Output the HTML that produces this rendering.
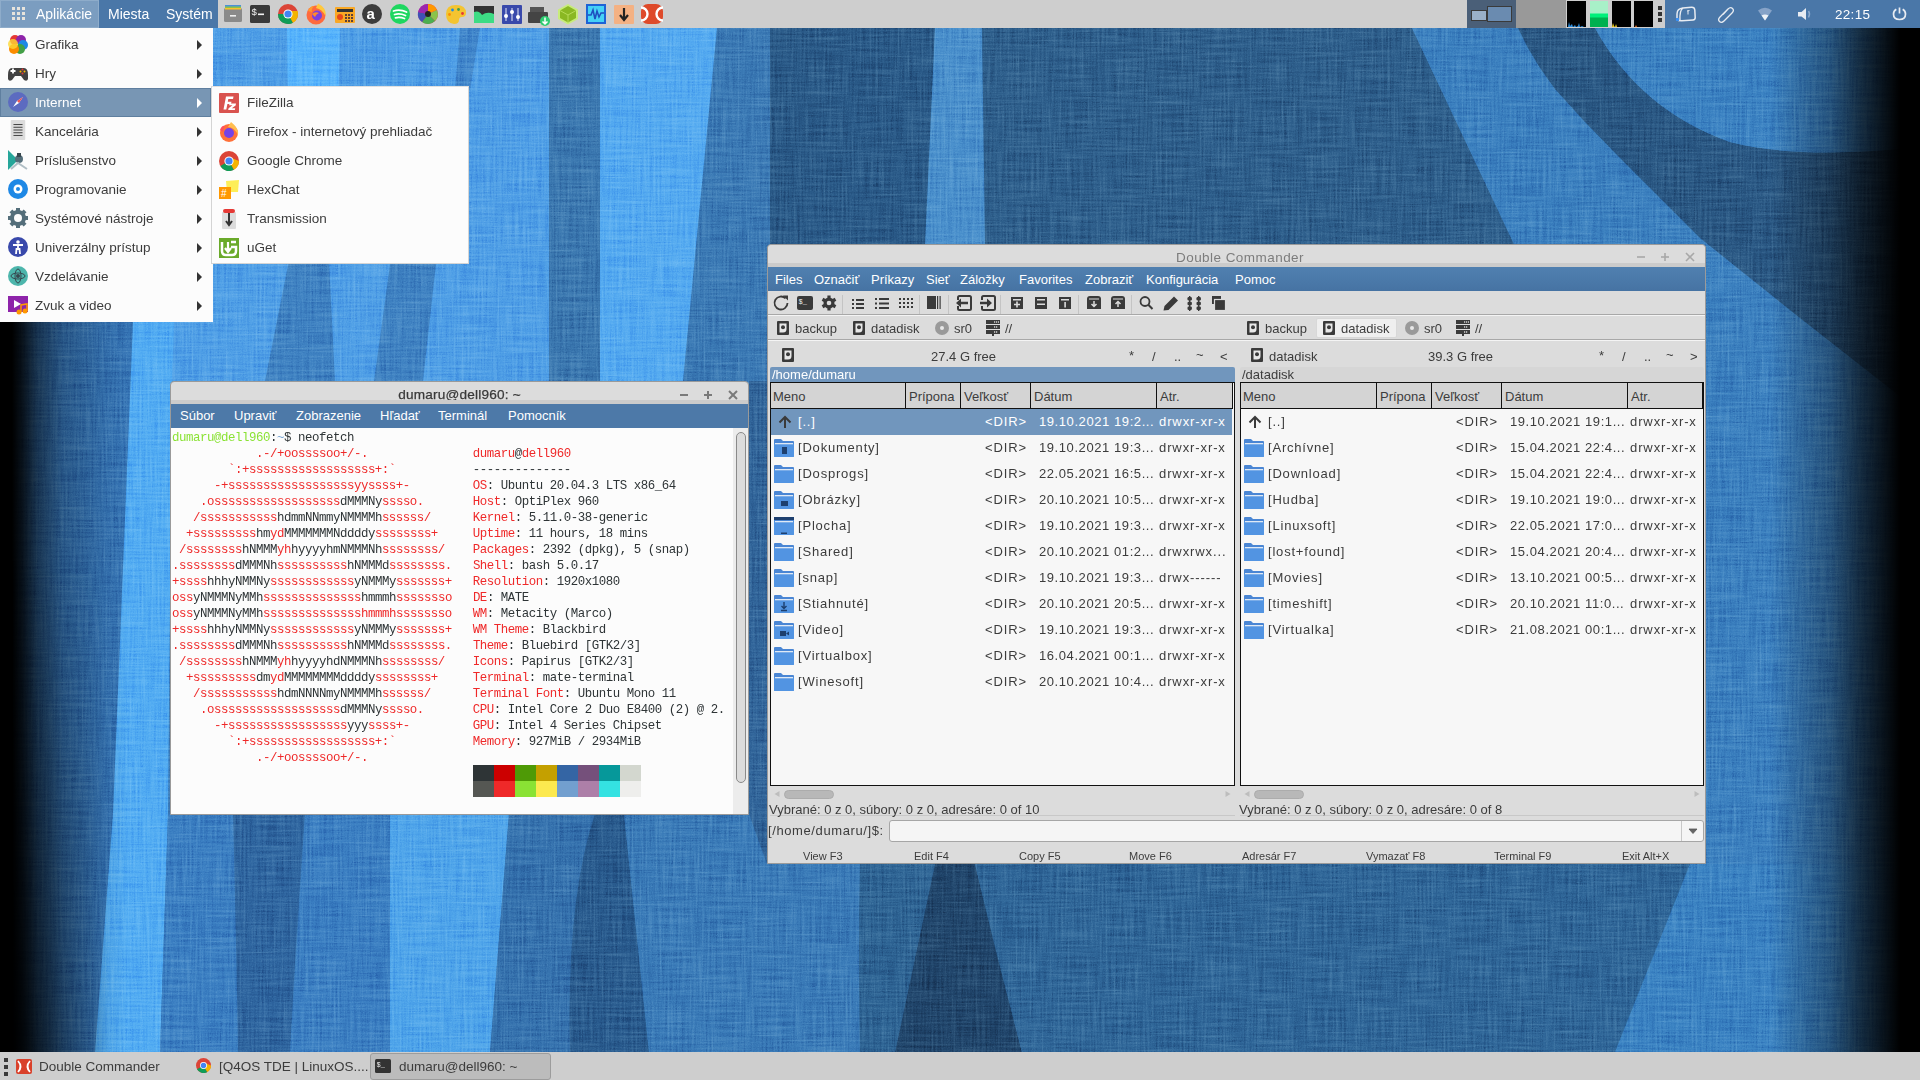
<!DOCTYPE html>
<html><head><meta charset="utf-8">
<style>
*{margin:0;padding:0;box-sizing:border-box}
html,body{width:1920px;height:1080px;overflow:hidden;background:#3f7fbd;font-family:"Liberation Sans",sans-serif}
.a{position:absolute}
#wall{position:absolute;left:0;top:0;width:1920px;height:1080px}
/* top panel */
#panel{position:absolute;left:0;top:0;width:1920px;height:28px;background:#cecece}
.ptxt{position:absolute;top:0;height:28px;line-height:28px;color:#fff;font-size:14px;white-space:nowrap}
/* menus */
.menu{position:absolute;background:#fcfcfc}
.mi{position:absolute;left:0;height:29px;width:100%;font-size:13.5px;color:#3c3c3c;line-height:29px;white-space:nowrap}
.mi .t{position:absolute;left:35px;top:0}
.mi .ar{position:absolute;left:197px;top:10px;width:0;height:0;border-top:5px solid transparent;border-bottom:5px solid transparent;border-left:5px solid #333}
.ic{position:absolute;width:20px;height:20px}
/* windows */
.win{position:absolute;background:#dcdcdc;border:1px solid #9a9a9a;border-radius:4px 4px 0 0;overflow:hidden}
.title{position:absolute;left:0;right:0;top:0;height:19px;text-align:center;font-size:13px;line-height:21px;white-space:nowrap}
.strip{position:absolute;left:0;right:0;top:18px;height:4px;background:#cbcbcb}
.mbar{position:absolute;left:0;right:0;top:22px;height:24px;background:#4d79a8}
.mbar span{position:absolute;top:0;line-height:24px;color:#fff;font-size:13px;white-space:nowrap}
.term{position:absolute;font-family:"Liberation Mono",monospace;font-size:12.4px;letter-spacing:-0.44px;line-height:16px;white-space:pre;color:#2e3436}
.r{color:#ef2929}.g{color:#8ae234}.b{color:#729fcf}
.dc{font-size:13px;color:#3c3c3c;white-space:nowrap}
</style></head><body>
<svg id="wall" width="1920" height="1080" viewBox="0 0 1920 1080">
<defs>
<linearGradient id="vl" x1="0" x2="1" y1="0" y2="0"><stop offset="0" stop-color="#000"/><stop offset="0.08" stop-color="#000"/><stop offset="0.15" stop-color="#000" stop-opacity="0.85"/><stop offset="0.25" stop-color="#000" stop-opacity="0.55"/><stop offset="0.42" stop-color="#000" stop-opacity="0.25"/><stop offset="0.7" stop-color="#000" stop-opacity="0.06"/><stop offset="0.85" stop-color="#000" stop-opacity="0"/></linearGradient>
<linearGradient id="vr" x1="0" x2="1" y1="0" y2="0"><stop offset="0" stop-color="#000" stop-opacity="0"/><stop offset="0.4" stop-color="#000" stop-opacity="0.35"/><stop offset="0.6" stop-color="#000" stop-opacity="0.66"/><stop offset="0.87" stop-color="#000" stop-opacity="1"/><stop offset="1" stop-color="#000"/></linearGradient>
</defs>
<rect x="0" y="0" width="1920" height="1080" fill="#3d7cb8"/>
<!-- left light region top -->
<polygon points="130,28 770,28 770,381 130,381" fill="#4f9fe6"/>
<polygon points="287,28 340,28 335,264 290,264" fill="#57b4fb"/>
<polygon points="600,28 717,28 683,381 600,381" fill="#54aaf0"/>
<polygon points="549,28 600,28 600,381 549,381" fill="#3b78b0"/>
<polygon points="717,28 770,28 770,381 683,381" fill="#3b7ab5"/>
<polygon points="305,180 325,180 335,381 265,381" fill="#3f82c2"/>
<polygon points="410,120 452,120 423,381 374,381" fill="#3f82c2"/>
<polygon points="460,28 480,28 470,90 455,90" fill="#4288cc"/>
<!-- left vignette column -->
<polygon points="0,28 135,28 133,381 113,814 95,1052 0,1052" fill="#3675b5"/>
<polygon points="133,322 174,322 172,381 168,814 160,1052 95,1052 113,814" fill="#52acf2"/>
<!-- bottom bands -->
<polygon points="168,814 235,814 240,1052 160,1052" fill="#3b7fc2"/>
<path d="M233,814 L305,814 Q295,950 290,1052 L238,1052 Q236,930 233,814Z" fill="#2f66a0"/>
<polygon points="305,814 390,814 390,1052 290,1052" fill="#3b7fc2"/>
<polygon points="390,814 509,814 490,1052 390,1052" fill="#4fa5ea"/>
<polygon points="509,814 640,814 650,1052 490,1052" fill="#3572ae"/>
<path d="M595,814 L624,814 L649,1052 L570,1052 Q566,900 595,814Z" fill="#295b8e"/>
<polygon points="624,814 770,814 770,1052 649,1052" fill="#3a7bb8"/>
<!-- DC gap strip -->
<polygon points="749,381 767,381 767,864 749,814" fill="#31659a"/>
<!-- bottom right -->
<polygon points="767,864 860,864 860,1052 767,1052" fill="#3a7bb8"/>
<path d="M860,864 L935,864 L895,1052 L860,1052 Q858,950 860,864Z" fill="#2e6494"/>
<polygon points="935,864 975,864 1022,1052 895,1052" fill="#21466c"/>
<path d="M975,864 L1695,864 Q1675,970 1625,1052 L1022,1052 Q995,950 975,864Z" fill="#2f6698"/>
<polygon points="1690,864 1920,864 1920,1052 1615,1052" fill="#3a82c2"/>
<!-- top right -->
<polygon points="770,28 935,28 930,244 770,244" fill="#2a5a88"/>
<polygon points="935,28 982,28 985,244 925,244" fill="#4a90cc"/>
<polygon points="982,28 1412,28 1514,244 985,244" fill="#2e5f8c"/>
<polygon points="1412,28 1518,28 1528,48 1540,68 1555,89 1585,122 1620,158 1700,238 1800,318 1920,412 1920,864 1706,864 1706,244 1514,244" fill="#3b80bf"/>
<path d="M1518,28 L1595,28 Q1640,110 1730,142 Q1800,160 1920,147 L1920,412 L1800,318 L1700,238 L1620,158 L1585,122 L1555,89 L1540,68 L1528,48 L1518,28Z" fill="#2a5884"/>
<path d="M1595,28 Q1640,110 1730,142 Q1800,160 1920,147 L1920,28Z" fill="#3b82c2"/>
<filter id="tex" x="0" y="0" width="1920" height="1080" filterUnits="userSpaceOnUse" color-interpolation-filters="sRGB">
<feTurbulence type="fractalNoise" baseFrequency="0.5 0.02" numOctaves="2" seed="4" result="vs"/>
<feTurbulence type="fractalNoise" baseFrequency="0.02 0.5" numOctaves="2" seed="9" result="hs"/>
<feTurbulence type="fractalNoise" baseFrequency="0.8" numOctaves="1" seed="2" result="gr"/>
<feComposite in="vs" in2="hs" operator="arithmetic" k1="0" k2="0.45" k3="0.45" k4="0" result="st"/>
<feComposite in="st" in2="gr" operator="arithmetic" k1="0" k2="1" k3="0.3" k4="-0.15" result="n"/>
<feColorMatrix in="n" type="matrix" values="1.6 0 0 0 -0.03  1.6 0 0 0 -0.03  1.6 0 0 0 -0.03  0 0 0 0 1"/>
</filter>
<rect x="0" y="28" width="1920" height="1024" filter="url(#tex)" opacity="0.42" style="mix-blend-mode:soft-light"/>
<rect x="0" y="28" width="150" height="1024" fill="url(#vl)"/>
<linearGradient id="vl2" x1="0" x2="1" y1="0" y2="0"><stop offset="0" stop-color="#000" stop-opacity="0.9"/><stop offset="0.35" stop-color="#000" stop-opacity="0.5"/><stop offset="0.7" stop-color="#000" stop-opacity="0.2"/><stop offset="1" stop-color="#000" stop-opacity="0"/></linearGradient>
<linearGradient id="vm" x1="0" x2="0" y1="0" y2="1"><stop offset="0" stop-color="#fff" stop-opacity="0"/><stop offset="1" stop-color="#fff" stop-opacity="1"/></linearGradient><mask id="mk" maskUnits="userSpaceOnUse" x="0" y="560" width="120" height="492"><rect x="0" y="560" width="120" height="492" fill="url(#vm)"/></mask>
<rect x="0" y="560" width="110" height="492" fill="url(#vl2)" mask="url(#mk)"/>
<rect x="1770" y="28" width="150" height="1024" fill="url(#vr)"/>
</svg>

<!-- TOP PANEL -->
<div id="panel">
<div class="a" style="left:0;top:0;width:99px;height:28px;background:#7b9dc0;border:1px solid #8eacca"></div>
<div class="a" style="left:99px;top:0;width:119px;height:28px;background:#4a77a8"></div>
<svg class="a" style="left:12px;top:7px" width="13" height="13" viewBox="0 0 13 13" fill="#e8e4dc"><rect x="0" y="0" width="3" height="3"/><rect x="5" y="0" width="3" height="3"/><rect x="10" y="0" width="3" height="3"/><rect x="0" y="5" width="3" height="3"/><rect x="5" y="5" width="3" height="3"/><rect x="10" y="5" width="3" height="3"/><rect x="0" y="10" width="3" height="3"/><rect x="5" y="10" width="3" height="3"/><rect x="10" y="10" width="3" height="3"/></svg>
<span class="ptxt" style="left:36px">Aplikácie</span>
<span class="ptxt" style="left:108px">Miesta</span>
<span class="ptxt" style="left:166px">Systém</span>
<!-- launchers -->
<svg class="a" style="left:220px;top:2px" width="450" height="24" viewBox="0 0 450 24">
 <!-- 1 file cabinet -->
 <rect x="4" y="6" width="18" height="14" rx="1.5" fill="#8a8a8a"/><rect x="5" y="3" width="16" height="2" fill="#4a90d9"/><rect x="5" y="4.5" width="16" height="2" fill="#8bc34a"/><rect x="5" y="6" width="16" height="1.5" fill="#fbc02d"/><rect x="10" y="13" width="6" height="1.6" fill="#eee"/>
 <!-- 2 terminal -->
 <rect x="30" y="3" width="20" height="18" rx="1.5" fill="#3a3a3a"/><text x="31.5" y="12.5" font-size="9.5" fill="#f2f2f2" font-family="Liberation Sans">$</text><rect x="38" y="11.5" width="6" height="1.6" fill="#f2f2f2"/>
 <!-- 3 chrome -->
 <circle cx="68" cy="12" r="10" fill="#db4437"/><path d="M68,12 L58.5,15 A10,10 0 0 0 73,20.7Z" fill="#0f9d58"/><path d="M68,12 L73,20.7 A10,10 0 0 0 77.6,9 L68,9Z" fill="#f4b400"/><path d="M58,12 A10,10 0 0 0 63,20.7 L68,12Z" fill="#0f9d58"/><circle cx="68" cy="12" r="4.6" fill="#fff"/><circle cx="68" cy="12" r="3.6" fill="#4285f4"/>
 <!-- 4 firefox -->
 <circle cx="96" cy="13" r="9.5" fill="#ff6a3d"/><path d="M88,9 Q90,4 94,4 Q91,7 92,10Z" fill="#ff9a2e"/><path d="M98,1.5 Q107,6 105.5,14 Q102,7 96,6Z" fill="#ffc83d"/><circle cx="97" cy="13.5" r="5" fill="#7b3fe0"/><path d="M92,12 Q95,9 99,11 Q96,12 95,15Z" fill="#ff8c2a"/>
 <!-- 5 radio -->
 <rect x="115" y="5" width="20" height="16" rx="1" fill="#f9a825"/><rect x="117" y="7" width="16" height="3" fill="#333"/><circle cx="120" cy="15" r="3" fill="#e64a19"/><g fill="#5d4037"><rect x="125" y="12" width="2" height="2"/><rect x="128" y="12" width="2" height="2"/><rect x="131" y="12" width="2" height="2"/><rect x="125" y="15" width="2" height="2"/><rect x="128" y="15" width="2" height="2"/><rect x="131" y="15" width="2" height="2"/><rect x="125" y="18" width="2" height="2"/><rect x="128" y="18" width="2" height="2"/><rect x="131" y="18" width="2" height="2"/></g>
 <!-- 6 amazon a -->
 <circle cx="152" cy="12" r="10" fill="#3c3c3c"/><text x="146.5" y="17" font-size="15" font-weight="bold" fill="#fff" font-family="Liberation Sans">a</text>
 <!-- 7 spotify -->
 <circle cx="180" cy="12" r="10" fill="#1ed760"/><path d="M173.5,9 Q180,7 186.5,10 M174.5,12.5 Q180,11 185.5,13.5 M175.5,15.8 Q180,14.8 184.5,16.5" stroke="#fff" stroke-width="1.8" fill="none" stroke-linecap="round"/>
 <!-- 8 aperture -->
 <circle cx="208" cy="12" r="10" fill="#e91e63"/><path d="M208,12 L208,2 A10,10 0 0 1 217,8Z" fill="#ff9800"/><path d="M208,12 L217,8 A10,10 0 0 1 215,19Z" fill="#8bc34a"/><path d="M208,12 L215,19 A10,10 0 0 1 202,20Z" fill="#4caf50"/><path d="M208,12 L202,20 A10,10 0 0 1 198,10Z" fill="#3f51b5"/><path d="M208,12 L198,10 A10,10 0 0 1 208,2Z" fill="#9c27b0"/><circle cx="208" cy="12" r="3" fill="#222"/>
 <!-- 9 palette -->
 <path d="M236,3 Q246,3 246,11 Q246,15 242,15 Q239,15 239,18 Q239,22 234,22 Q226,21 226,12 Q226,3 236,3Z" fill="#f4c430"/><circle cx="232.5" cy="8" r="1.4" fill="#1e88e5"/><circle cx="238.5" cy="7.5" r="1.4" fill="#43a047"/><circle cx="229.5" cy="12.5" r="1.4" fill="#fb8c00"/><circle cx="242.5" cy="11.5" r="1.4" fill="#e53935"/>
 <!-- 10 green chart -->
 <rect x="254" y="4" width="20" height="17" fill="#333"/><path d="M254,21 L254,10 Q259,8 262,13 Q267,9 274,12 L274,21Z" fill="#3ddc84"/>
 <!-- 11 mixer -->
 <rect x="282" y="3" width="20" height="19" rx="1" fill="#3949ab"/><g stroke="#e8eaf6" stroke-width="1"><line x1="286" y1="6" x2="286" y2="19"/><line x1="292" y1="6" x2="292" y2="19"/><line x1="298" y1="6" x2="298" y2="19"/></g><g fill="#fff"><circle cx="286" cy="14" r="2"/><circle cx="292" cy="10" r="2"/><circle cx="298" cy="15" r="2"/></g>
 <!-- 12 printer download -->
 <rect x="310" y="5" width="14" height="5" fill="#555"/><rect x="308" y="10" width="20" height="11" rx="1" fill="#444"/><circle cx="325" cy="19" r="5" fill="#2ecc71"/><path d="M325,15.5 L325,22 M322.5,19.5 L325,22 L327.5,19.5" stroke="#fff" stroke-width="1.5" fill="none"/>
 <!-- 13 green cube -->
 <path d="M348,2 L358,7.5 L358,17 L348,22.5 L338,17 L338,7.5Z" fill="#c8ec7a"/><path d="M348,4 L356,8.5 L356,16 L348,20.5 L340,16 L340,8.5Z" fill="#8ab823"/><path d="M340,8.5 L348,13 L356,8.5 M348,13 V20.5" stroke="#b6dc58" stroke-width="1" fill="none"/>
 <!-- 14 waveform -->
 <rect x="366" y="2" width="20" height="20" fill="#1f63d6"/><rect x="368" y="4" width="16" height="16" fill="#46d2f6"/><path d="M368,13 L371,13 L373,8 L375,17 L377,9 L379,15 L381,11 L384,11" stroke="#1f4fc0" stroke-width="1.6" fill="none"/>
 <!-- 15 orange download -->
 <rect x="394" y="3" width="20" height="19" rx="1" fill="#f4b183"/><path d="M404,6 L404,17 M400,13 L404,18 L408,13" stroke="#222" stroke-width="2.2" fill="none"/>
 <!-- 16 DC -->
 <rect x="421" y="2" width="22" height="20" rx="7" fill="#de4a2a"/><path d="M421,5.5 A6.5,6.5 0 0 1 421,18.5" stroke="#fff" stroke-width="2.4" fill="none"/><path d="M443,5.5 A6.5,6.5 0 0 0 443,18.5" stroke="#fff" stroke-width="2.4" fill="none"/>
</svg>
<!-- right side -->
<div class="a" style="left:1467px;top:0;width:49px;height:28px;background:#4a5f78"></div>
<div class="a" style="left:1471px;top:10px;width:16px;height:11px;background:#9ab0c8;border:1px solid #3a3a3a"></div>
<div class="a" style="left:1487px;top:6px;width:25px;height:16px;background:#6a8bb0;border:1px solid #3a3a3a"></div>
<div class="a" style="left:1516px;top:0;width:50px;height:28px;background:#999"></div>
<div class="a" style="left:1567px;top:1px;width:19px;height:26px;background:#000"></div>
<div class="a" style="left:1590px;top:1px;width:18px;height:26px;background:linear-gradient(#a8f0c8 0,#a8f0c8 12px,#00f07a 13px,#00f07a 16px,#00b050 17px)"></div>
<div class="a" style="left:1612px;top:1px;width:19px;height:26px;background:#000"></div>
<div class="a" style="left:1634px;top:1px;width:19px;height:26px;background:#000"></div>
<svg class="a" style="left:1567px;top:20px" width="86" height="7" viewBox="0 0 86 7"><path d="M1,7 L2,2 L3,6 L5,4 L6,7 L8,5 L9,7 L11,6 L12,3 L13,7 L15,6 L17,7Z" fill="#2f8fe0"/><path d="M45,7 L46,3 L47,6 L48,7 L49,4 L50,7Z" fill="#f0d020"/><path d="M68,7 L69,5 L70,7Z" fill="#f07020"/></svg>
<div class="a" style="left:1658px;top:6px;width:4px;height:4px;background:#333"></div>
<div class="a" style="left:1658px;top:12px;width:4px;height:4px;background:#333"></div>
<div class="a" style="left:1658px;top:18px;width:4px;height:4px;background:#333"></div>
<div class="a" style="left:1665px;top:0;width:255px;height:28px;background:#4a77a8"></div>
<svg class="a" style="left:1665px;top:0" width="255" height="28" viewBox="0 0 255 28">
 <path d="M12,19.5 V14 Q12,8.5 18,8 L26.5,7.2 Q29.5,7 29.8,10 L30.2,17.5 Q30.3,19.8 28,20 L17,20.8 Q13,21 12,19.5Z" fill="none" stroke="#e8ecf2" stroke-width="1.5"/><path d="M18,8.2 Q14.5,10 15,20.5" fill="none" stroke="#e8ecf2" stroke-width="1.3"/><path d="M22,11 L24.5,10.5 M23,10.7 V14.5" stroke="#e8ecf2" stroke-width="1"/><rect x="11" y="18" width="3" height="3" fill="#3a8ef0"/>
 <path d="M58,14.5 L63,9 Q65.5,6.5 67.5,8.5 Q69.5,10.5 67,13 L59,21 Q56.5,23.5 54.5,21.5 Q52.5,19.5 55,17 L62.5,9.5" fill="none" stroke="#e8ecf2" stroke-width="1.3"/>
 <path d="M93,10.5 Q100,5 107,10.5 L100,20.5Z" fill="#86a3c8"/><path d="M96.5,15.5 Q100,13.5 103.5,15.5 L100,20.5Z" fill="#eef2f7"/>
 <path d="M133,12 L136.5,12 L141,8 L141,20 L136.5,16.5 L133,16.5Z" fill="#e8ecf2"/><path d="M143.5,11 Q145.5,14 143.5,17.5" stroke="#8aa8cc" stroke-width="1.5" fill="none"/>
 <text x="170" y="19" font-size="13.5" fill="#fff" font-family="Liberation Sans" letter-spacing="0.3">22:15</text>
 <path d="M231.3,9.3 Q228.5,11 228.5,14 Q228.5,19.5 234.5,19.5 Q240.5,19.5 240.5,14 Q240.5,11 237.7,9.3" fill="none" stroke="#e8ecf2" stroke-width="1.7"/><line x1="234.5" y1="7.5" x2="234.5" y2="13.5" stroke="#e8ecf2" stroke-width="1.7"/>
</svg>
</div>



<!-- DOUBLE COMMANDER -->
<div class="a" style="left:767px;top:244px;width:939px;height:620px;background:#dcdcdc;border:1px solid #9a9a9a;border-radius:4px 4px 0 0"></div>
<div class="a" style="left:768px;top:245px;width:937px;height:18px;background:#dcdcdc;border-radius:4px 4px 0 0"></div>
<div class="a" style="left:1100px;top:251px;width:280px;text-align:center;font-size:13.5px;letter-spacing:0.45px;line-height:14px;color:#7c7c7c;white-space:nowrap">Double Commander</div>
<svg class="a" style="left:1634px;top:252px" width="62" height="10" viewBox="0 0 62 10"><g stroke="#a8a8a8" stroke-width="1.6"><line x1="3" y1="5" x2="11" y2="5"/><line x1="27" y1="5" x2="35" y2="5"/><line x1="31" y1="1" x2="31" y2="9"/><line x1="52" y1="1" x2="60" y2="9"/><line x1="60" y1="1" x2="52" y2="9"/></g></svg>
<div class="a" style="left:768px;top:263px;width:937px;height:4px;background:#cbcbcb"></div>
<div class="a" style="left:768px;top:267px;width:937px;height:24px;background:linear-gradient(#5080b0,#4673a3)"></div>
<span class="a dc" style="left:775px;top:273px;font-size:13px;color:#fff;line-height:1;">Files</span>
<span class="a dc" style="left:814px;top:273px;font-size:13px;color:#fff;line-height:1;">Označiť</span>
<span class="a dc" style="left:871px;top:273px;font-size:13px;color:#fff;line-height:1;">Príkazy</span>
<span class="a dc" style="left:926px;top:273px;font-size:13px;color:#fff;line-height:1;">Sieť</span>
<span class="a dc" style="left:960px;top:273px;font-size:13px;color:#fff;line-height:1;">Záložky</span>
<span class="a dc" style="left:1019px;top:273px;font-size:13px;color:#fff;line-height:1;">Favorites</span>
<span class="a dc" style="left:1085px;top:273px;font-size:13px;color:#fff;line-height:1;">Zobraziť</span>
<span class="a dc" style="left:1146px;top:273px;font-size:13px;color:#fff;line-height:1;">Konfigurácia</span>
<span class="a dc" style="left:1235px;top:273px;font-size:13px;color:#fff;line-height:1;">Pomoc</span>
<div class="a" style="left:768px;top:291px;width:937px;height:24px;background:#dcdcdc"></div>
<div class="a" style="left:768px;top:314px;width:937px;height:2px;background:#a8a8a8;border-bottom:1px solid #f4f4f4"></div>
<svg class="a" style="left:767px;top:291px" width="470" height="24" viewBox="0 0 470 24" fill="#3a3a3a" stroke="none">
<!-- refresh 781 -->
<path d="M20.5,12 A6.5,6.5 0 1 1 18.6,7.4" fill="none" stroke="#3a3a3a" stroke-width="1.8"/><path d="M16,4.5 L21,4.5 L21,9.5Z"/>
<!-- terminal 805 -->
<rect x="30" y="5" width="16" height="14" rx="2"/><text x="31.5" y="13" font-size="7" fill="#eee" font-family="Liberation Mono">$_</text>
<!-- gear 829 -->
<g transform="translate(62,12)"><circle r="5.5"/><g><rect x="-1.6" y="-7.5" width="3.2" height="15"/><rect x="-1.6" y="-7.5" width="3.2" height="15" transform="rotate(60)"/><rect x="-1.6" y="-7.5" width="3.2" height="15" transform="rotate(120)"/></g><circle r="2.3" fill="#dcdcdc"/></g>
<rect x="75" y="4" width="1" height="19" fill="#c4c4c4"/>
<!-- list 858 -->
<g transform="translate(85,7)"><rect x="0" y="1" width="2" height="2"/><rect x="4" y="1" width="8" height="2"/><rect x="0" y="5" width="2" height="2"/><rect x="4" y="5" width="8" height="2"/><rect x="0" y="9" width="2" height="2"/><rect x="4" y="9" width="8" height="2"/></g>
<g transform="translate(108,6)"><rect x="0" y="1" width="2" height="2"/><rect x="4" y="1" width="10" height="2"/><rect x="0" y="5.5" width="2" height="2"/><rect x="4" y="5.5" width="10" height="2"/><rect x="0" y="10" width="2" height="2"/><rect x="4" y="10" width="10" height="2"/></g>
<g transform="translate(132,7)"><rect x="0" y="0" width="2" height="2"/><rect x="4" y="0" width="2" height="2"/><rect x="8" y="0" width="2" height="2"/><rect x="12" y="0" width="2" height="2"/><rect x="0" y="4" width="2" height="2"/><rect x="4" y="4" width="2" height="2"/><rect x="8" y="4" width="2" height="2"/><rect x="12" y="4" width="2" height="2"/><rect x="0" y="8" width="2" height="2"/><rect x="4" y="8" width="2" height="2"/><rect x="8" y="8" width="2" height="2"/><rect x="12" y="8" width="2" height="2"/></g>
<rect x="152" y="4" width="1" height="19" fill="#c4c4c4"/>
<!-- panel 934 -->
<rect x="160" y="5" width="9" height="13"/><rect x="170" y="5" width="1.2" height="13"/><rect x="172.5" y="5" width="1.2" height="13"/>
<rect x="181" y="4" width="1" height="19" fill="#c4c4c4"/>
<!-- exit left 963 -->
<path d="M191,9 V6.5 Q191,5 192.5,5 H202.5 Q204,5 204,6.5 V17.5 Q204,19 202.5,19 H192.5 Q191,19 191,17.5 V15" fill="none" stroke="#3a3a3a" stroke-width="2"/><path d="M189,12 L194,7.5 V10.8 H201 V13.2 H194 V16.5Z"/>
<!-- enter right 987 -->
<path d="M215,9 V6.5 Q215,5 216.5,5 H226.5 Q228,5 228,6.5 V17.5 Q228,19 226.5,19 H216.5 Q215,19 215,17.5 V15" fill="none" stroke="#3a3a3a" stroke-width="2"/><path d="M225,12 L220,7.5 V10.8 H213 V13.2 H220 V16.5Z"/>
<rect x="233" y="4" width="1" height="19" fill="#c4c4c4"/>
<!-- box + 1017 -->
<rect x="244" y="6" width="12" height="12"/><rect x="246" y="8" width="8" height="1.5" fill="#dcdcdc"/><path d="M250,10.5 V16.5 M247,13.5 H253" stroke="#dcdcdc" stroke-width="1.6"/>
<rect x="268" y="6" width="12" height="12"/><rect x="270" y="8" width="8" height="1.5" fill="#dcdcdc"/><rect x="270" y="12.5" width="8" height="1.5" fill="#dcdcdc"/>
<rect x="292" y="6" width="12" height="12"/><rect x="294" y="8" width="8" height="1.5" fill="#dcdcdc"/><rect x="297.3" y="11" width="1.6" height="5.5" fill="#dcdcdc"/>
<rect x="311" y="4" width="1" height="19" fill="#c4c4c4"/>
<!-- archive down 1094 -->
<path d="M320,8 Q320,5 323,5 H331 Q334,5 334,8 V18 H320Z"/><rect x="322" y="7.5" width="10" height="1" fill="#dcdcdc"/><path d="M327,10 V15 M324.5,13 L327,15.5 L329.5,13" stroke="#dcdcdc" stroke-width="1.5" fill="none"/>
<path d="M344,8 Q344,5 347,5 H355 Q358,5 358,8 V18 H344Z"/><rect x="346" y="7.5" width="10" height="1" fill="#dcdcdc"/><path d="M351,16 V11 M348.5,13 L351,10.5 L353.5,13" stroke="#dcdcdc" stroke-width="1.5" fill="none"/>
<rect x="364" y="4" width="1" height="19" fill="#c4c4c4"/>
<!-- search 1147 -->
<circle cx="378" cy="10.5" r="4.5" fill="none" stroke="#3a3a3a" stroke-width="1.8"/><path d="M381.3,13.8 L385.5,18" stroke="#3a3a3a" stroke-width="2"/>
<!-- pencil 1171 -->
<path d="M396.5,19.5 L397.5,15 L407,5.5 L411,9.5 L401.5,19Z"/>
<!-- columns 1195 -->
<g><rect x="422" y="5" width="1.4" height="15"/><rect x="420.5" y="6" width="4.4" height="3.4" rx="1.2"/><rect x="420.5" y="10.8" width="4.4" height="3.4" rx="1.2"/><rect x="420.5" y="15.6" width="4.4" height="3.4" rx="1.2"/>
<rect x="431" y="5" width="1.4" height="15"/><rect x="429.5" y="6" width="4.4" height="3.4" rx="1.2"/><rect x="429.5" y="10.8" width="4.4" height="3.4" rx="1.2"/><rect x="429.5" y="15.6" width="4.4" height="3.4" rx="1.2"/></g>
<!-- copy 1219 -->
<rect x="445" y="5" width="9" height="8"/><rect x="447.5" y="8.5" width="11" height="11" stroke="#dcdcdc" stroke-width="1.2"/>
</svg>
<div class="a" style="left:768px;top:339px;width:937px;height:2px;background:#a8a8a8;border-bottom:1px solid #f4f4f4"></div>
<div class="a" style="left:1316px;top:318px;width:81px;height:20px;background:#efefef;border:1px solid #d8d8d8;border-radius:2px"></div>
<svg class="a" style="left:777px;top:321px" width="12" height="14" viewBox="0 0 12 14"><rect x="0" y="0" width="12" height="14" rx="1" fill="#3a3a3a"/><path d="M2.5,2.5 H9.5 V8 Q9.5,11.5 6,11.5 H2.5Z" fill="#e8e8e8"/><circle cx="6" cy="6.3" r="2" fill="#3a3a3a"/></svg>
<span class="a dc" style="left:795px;top:322px;font-size:13px;color:#3c3c3c;line-height:1;">backup</span>
<svg class="a" style="left:853px;top:321px" width="12" height="14" viewBox="0 0 12 14"><rect x="0" y="0" width="12" height="14" rx="1" fill="#3a3a3a"/><path d="M2.5,2.5 H9.5 V8 Q9.5,11.5 6,11.5 H2.5Z" fill="#e8e8e8"/><circle cx="6" cy="6.3" r="2" fill="#3a3a3a"/></svg>
<span class="a dc" style="left:871px;top:322px;font-size:13px;color:#3c3c3c;line-height:1;">datadisk</span>
<svg class="a" style="left:935px;top:321px" width="14" height="14" viewBox="0 0 14 14"><circle cx="7" cy="7" r="7" fill="#9a9a9a"/><circle cx="7" cy="7" r="2" fill="#e8e8e8"/></svg>
<span class="a dc" style="left:954px;top:322px;font-size:13px;color:#3c3c3c;line-height:1;">sr0</span>
<svg class="a" style="left:986px;top:320px" width="14" height="16" viewBox="0 0 14 16"><rect x="0" y="0" width="14" height="4" fill="#3a3a3a"/><rect x="0" y="5" width="14" height="4" fill="#3a3a3a"/><rect x="0" y="10" width="14" height="4" fill="#3a3a3a"/><rect x="6" y="14" width="2" height="2" fill="#3a3a3a"/><g fill="#dcdcdc"><rect x="8" y="1.3" width="1.2" height="1.4"/><rect x="10" y="1.3" width="1.2" height="1.4"/><rect x="12" y="1.3" width="1" height="1.4"/><rect x="8" y="6.3" width="1.2" height="1.4"/><rect x="10" y="6.3" width="1.2" height="1.4"/><rect x="8" y="11.3" width="1.2" height="1.4"/><rect x="10" y="11.3" width="1.2" height="1.4"/></g></svg>
<span class="a dc" style="left:1005px;top:322px;font-size:13px;color:#3c3c3c;line-height:1;">//</span>
<svg class="a" style="left:1247px;top:321px" width="12" height="14" viewBox="0 0 12 14"><rect x="0" y="0" width="12" height="14" rx="1" fill="#3a3a3a"/><path d="M2.5,2.5 H9.5 V8 Q9.5,11.5 6,11.5 H2.5Z" fill="#e8e8e8"/><circle cx="6" cy="6.3" r="2" fill="#3a3a3a"/></svg>
<span class="a dc" style="left:1265px;top:322px;font-size:13px;color:#3c3c3c;line-height:1;">backup</span>
<svg class="a" style="left:1323px;top:321px" width="12" height="14" viewBox="0 0 12 14"><rect x="0" y="0" width="12" height="14" rx="1" fill="#3a3a3a"/><path d="M2.5,2.5 H9.5 V8 Q9.5,11.5 6,11.5 H2.5Z" fill="#e8e8e8"/><circle cx="6" cy="6.3" r="2" fill="#3a3a3a"/></svg>
<span class="a dc" style="left:1341px;top:322px;font-size:13px;color:#3c3c3c;line-height:1;">datadisk</span>
<svg class="a" style="left:1405px;top:321px" width="14" height="14" viewBox="0 0 14 14"><circle cx="7" cy="7" r="7" fill="#9a9a9a"/><circle cx="7" cy="7" r="2" fill="#e8e8e8"/></svg>
<span class="a dc" style="left:1424px;top:322px;font-size:13px;color:#3c3c3c;line-height:1;">sr0</span>
<svg class="a" style="left:1456px;top:320px" width="14" height="16" viewBox="0 0 14 16"><rect x="0" y="0" width="14" height="4" fill="#3a3a3a"/><rect x="0" y="5" width="14" height="4" fill="#3a3a3a"/><rect x="0" y="10" width="14" height="4" fill="#3a3a3a"/><rect x="6" y="14" width="2" height="2" fill="#3a3a3a"/><g fill="#dcdcdc"><rect x="8" y="1.3" width="1.2" height="1.4"/><rect x="10" y="1.3" width="1.2" height="1.4"/><rect x="12" y="1.3" width="1" height="1.4"/><rect x="8" y="6.3" width="1.2" height="1.4"/><rect x="10" y="6.3" width="1.2" height="1.4"/><rect x="8" y="11.3" width="1.2" height="1.4"/><rect x="10" y="11.3" width="1.2" height="1.4"/></g></svg>
<span class="a dc" style="left:1475px;top:322px;font-size:13px;color:#3c3c3c;line-height:1;">//</span>
<svg class="a" style="left:782px;top:348px" width="12" height="14" viewBox="0 0 12 14"><rect x="0" y="0" width="12" height="14" rx="1" fill="#3a3a3a"/><path d="M2.5,2.5 H9.5 V8 Q9.5,11.5 6,11.5 H2.5Z" fill="#e8e8e8"/><circle cx="6" cy="6.3" r="2" fill="#3a3a3a"/></svg>
<span class="a dc" style="left:931px;top:350px;font-size:13px;color:#3c3c3c;line-height:1;">27.4 G free</span>
<svg class="a" style="left:1251px;top:348px" width="12" height="14" viewBox="0 0 12 14"><rect x="0" y="0" width="12" height="14" rx="1" fill="#3a3a3a"/><path d="M2.5,2.5 H9.5 V8 Q9.5,11.5 6,11.5 H2.5Z" fill="#e8e8e8"/><circle cx="6" cy="6.3" r="2" fill="#3a3a3a"/></svg>
<span class="a dc" style="left:1269px;top:350px;font-size:13px;color:#3c3c3c;line-height:1;">datadisk</span>
<span class="a dc" style="left:1428px;top:350px;font-size:13px;color:#3c3c3c;line-height:1;">39.3 G free</span>
<span class="a dc" style="left:1129px;top:349px;font-size:13px;color:#3c3c3c;line-height:1;">*</span>
<span class="a dc" style="left:1152px;top:350px;font-size:13px;color:#3c3c3c;line-height:1;">/</span>
<span class="a dc" style="left:1174px;top:350px;font-size:13px;color:#3c3c3c;line-height:1;">..</span>
<span class="a dc" style="left:1196px;top:348px;font-size:13px;color:#3c3c3c;line-height:1;">~</span>
<span class="a dc" style="left:1220px;top:350px;font-size:13px;color:#3c3c3c;line-height:1;">&lt;</span>
<span class="a dc" style="left:1599px;top:349px;font-size:13px;color:#3c3c3c;line-height:1;">*</span>
<span class="a dc" style="left:1622px;top:350px;font-size:13px;color:#3c3c3c;line-height:1;">/</span>
<span class="a dc" style="left:1644px;top:350px;font-size:13px;color:#3c3c3c;line-height:1;">..</span>
<span class="a dc" style="left:1666px;top:348px;font-size:13px;color:#3c3c3c;line-height:1;">~</span>
<span class="a dc" style="left:1690px;top:350px;font-size:13px;color:#3c3c3c;line-height:1;">&gt;</span>
<div class="a" style="left:770px;top:367px;width:465px;height:15px;background:#7196bd;border-radius:2px 2px 0 0"></div>
<span class="a dc" style="left:772px;top:368px;font-size:13px;color:#fff;line-height:1;">/home/dumaru</span>
<div class="a" style="left:1240px;top:367px;width:464px;height:15px;background:#d6d6d6;border-radius:2px 2px 0 0"></div>
<span class="a dc" style="left:1242px;top:368px;font-size:13px;color:#3c3c3c;line-height:1;">/datadisk</span>
<div class="a" style="left:770px;top:382px;width:465px;height:404px;background:#f7f7f7;border:1px solid #111"></div>
<div class="a" style="left:771px;top:383px;width:461px;height:26px;background:#d4d4d4;border-bottom:1px solid #111"></div>
<div class="a" style="left:905px;top:383px;width:1px;height:26px;background:#111"></div>
<div class="a" style="left:960px;top:383px;width:1px;height:26px;background:#111"></div>
<div class="a" style="left:1030px;top:383px;width:1px;height:26px;background:#111"></div>
<div class="a" style="left:1156px;top:383px;width:1px;height:26px;background:#111"></div>
<div class="a" style="left:1232px;top:383px;width:1px;height:26px;background:#111"></div>
<span class="a dc" style="left:773px;top:390px;font-size:13px;color:#3c3c3c;line-height:1;">Meno</span>
<span class="a dc" style="left:909px;top:390px;font-size:13px;color:#3c3c3c;line-height:1;">Prípona</span>
<span class="a dc" style="left:964px;top:390px;font-size:13px;color:#3c3c3c;line-height:1;">Veľkosť</span>
<span class="a dc" style="left:1034px;top:390px;font-size:13px;color:#3c3c3c;line-height:1;">Dátum</span>
<span class="a dc" style="left:1160px;top:390px;font-size:13px;color:#3c3c3c;line-height:1;">Atr.</span>
<div class="a" style="left:771px;top:409px;width:461px;height:26px;background:#7196bd"></div>
<svg class="a" style="left:778px;top:415px" width="14" height="14" viewBox="0 0 14 14"><path d="M7,13 V2 M1.5,7.5 L7,2 L12.5,7.5" stroke="#3a3a3a" stroke-width="2" fill="none"/></svg>
<span class="a dc" style="left:798px;top:415px;font-size:13px;color:#fff;line-height:1;letter-spacing:0.8px">[..]</span>
<span class="a dc" style="left:985px;top:415px;font-size:13px;color:#fff;line-height:1;letter-spacing:0.85px;">&lt;DIR&gt;</span>
<span class="a dc" style="left:1039px;top:415px;font-size:13px;color:#fff;line-height:1;letter-spacing:0.58px;">19.10.2021 19:2...</span>
<span class="a dc" style="left:1159px;top:415px;font-size:13px;color:#fff;line-height:1;letter-spacing:0.9px;">drwxr-xr-x</span>
<svg class="a" style="left:774px;top:439px" width="20" height="18" viewBox="0 0 20 18"><path d="M0,1 Q0,0 1,0 H7 L9,2 H19 Q20,2 20,3 V17 Q20,18 19,18 H1 Q0,18 0,17Z" fill="#4a86d4"/><rect x="0" y="4" width="20" height="14" rx="1" fill="#5294e2"/><rect x="1" y="4" width="18" height="1.3" fill="#dfe9f5"/><rect x="8" y="8" width="5" height="7" fill="#1d3f6e"/></svg>
<span class="a dc" style="left:798px;top:441px;font-size:13px;color:#3c3c3c;line-height:1;letter-spacing:0.8px">[Dokumenty]</span>
<span class="a dc" style="left:985px;top:441px;font-size:13px;color:#3c3c3c;line-height:1;letter-spacing:0.85px;">&lt;DIR&gt;</span>
<span class="a dc" style="left:1039px;top:441px;font-size:13px;color:#3c3c3c;line-height:1;letter-spacing:0.58px;">19.10.2021 19:3...</span>
<span class="a dc" style="left:1159px;top:441px;font-size:13px;color:#3c3c3c;line-height:1;letter-spacing:0.9px;">drwxr-xr-x</span>
<svg class="a" style="left:774px;top:465px" width="20" height="18" viewBox="0 0 20 18"><path d="M0,1 Q0,0 1,0 H7 L9,2 H19 Q20,2 20,3 V17 Q20,18 19,18 H1 Q0,18 0,17Z" fill="#4a86d4"/><rect x="0" y="4" width="20" height="14" rx="1" fill="#5294e2"/><rect x="1" y="4" width="18" height="1.3" fill="#dfe9f5"/></svg>
<span class="a dc" style="left:798px;top:467px;font-size:13px;color:#3c3c3c;line-height:1;letter-spacing:0.8px">[Dosprogs]</span>
<span class="a dc" style="left:985px;top:467px;font-size:13px;color:#3c3c3c;line-height:1;letter-spacing:0.85px;">&lt;DIR&gt;</span>
<span class="a dc" style="left:1039px;top:467px;font-size:13px;color:#3c3c3c;line-height:1;letter-spacing:0.58px;">22.05.2021 16:5...</span>
<span class="a dc" style="left:1159px;top:467px;font-size:13px;color:#3c3c3c;line-height:1;letter-spacing:0.9px;">drwxr-xr-x</span>
<svg class="a" style="left:774px;top:491px" width="20" height="18" viewBox="0 0 20 18"><path d="M0,1 Q0,0 1,0 H7 L9,2 H19 Q20,2 20,3 V17 Q20,18 19,18 H1 Q0,18 0,17Z" fill="#4a86d4"/><rect x="0" y="4" width="20" height="14" rx="1" fill="#5294e2"/><rect x="1" y="4" width="18" height="1.3" fill="#dfe9f5"/><rect x="7" y="10" width="7" height="5" fill="#1d3f6e"/></svg>
<span class="a dc" style="left:798px;top:493px;font-size:13px;color:#3c3c3c;line-height:1;letter-spacing:0.8px">[Obrázky]</span>
<span class="a dc" style="left:985px;top:493px;font-size:13px;color:#3c3c3c;line-height:1;letter-spacing:0.85px;">&lt;DIR&gt;</span>
<span class="a dc" style="left:1039px;top:493px;font-size:13px;color:#3c3c3c;line-height:1;letter-spacing:0.58px;">20.10.2021 10:5...</span>
<span class="a dc" style="left:1159px;top:493px;font-size:13px;color:#3c3c3c;line-height:1;letter-spacing:0.9px;">drwxr-xr-x</span>
<svg class="a" style="left:774px;top:517px" width="20" height="18" viewBox="0 0 20 18"><path d="M0,1 Q0,0 1,0 H7 L9,2 H19 Q20,2 20,3 V17 Q20,18 19,18 H1 Q0,18 0,17Z" fill="#4a86d4"/><rect x="0" y="4" width="20" height="14" rx="1" fill="#5294e2"/><rect x="1" y="4" width="18" height="1.3" fill="#dfe9f5"/><rect x="0" y="0" width="20" height="3" fill="#1d3f6e"/><rect x="7" y="15.5" width="6" height="1.5" fill="#1d3f6e"/></svg>
<span class="a dc" style="left:798px;top:519px;font-size:13px;color:#3c3c3c;line-height:1;letter-spacing:0.8px">[Plocha]</span>
<span class="a dc" style="left:985px;top:519px;font-size:13px;color:#3c3c3c;line-height:1;letter-spacing:0.85px;">&lt;DIR&gt;</span>
<span class="a dc" style="left:1039px;top:519px;font-size:13px;color:#3c3c3c;line-height:1;letter-spacing:0.58px;">19.10.2021 19:3...</span>
<span class="a dc" style="left:1159px;top:519px;font-size:13px;color:#3c3c3c;line-height:1;letter-spacing:0.9px;">drwxr-xr-x</span>
<svg class="a" style="left:774px;top:543px" width="20" height="18" viewBox="0 0 20 18"><path d="M0,1 Q0,0 1,0 H7 L9,2 H19 Q20,2 20,3 V17 Q20,18 19,18 H1 Q0,18 0,17Z" fill="#4a86d4"/><rect x="0" y="4" width="20" height="14" rx="1" fill="#5294e2"/><rect x="1" y="4" width="18" height="1.3" fill="#dfe9f5"/></svg>
<span class="a dc" style="left:798px;top:545px;font-size:13px;color:#3c3c3c;line-height:1;letter-spacing:0.8px">[Shared]</span>
<span class="a dc" style="left:985px;top:545px;font-size:13px;color:#3c3c3c;line-height:1;letter-spacing:0.85px;">&lt;DIR&gt;</span>
<span class="a dc" style="left:1039px;top:545px;font-size:13px;color:#3c3c3c;line-height:1;letter-spacing:0.58px;">20.10.2021 01:2...</span>
<span class="a dc" style="left:1159px;top:545px;font-size:13px;color:#3c3c3c;line-height:1;letter-spacing:0.9px;">drwxrwx...</span>
<svg class="a" style="left:774px;top:569px" width="20" height="18" viewBox="0 0 20 18"><path d="M0,1 Q0,0 1,0 H7 L9,2 H19 Q20,2 20,3 V17 Q20,18 19,18 H1 Q0,18 0,17Z" fill="#4a86d4"/><rect x="0" y="4" width="20" height="14" rx="1" fill="#5294e2"/><rect x="1" y="4" width="18" height="1.3" fill="#dfe9f5"/></svg>
<span class="a dc" style="left:798px;top:571px;font-size:13px;color:#3c3c3c;line-height:1;letter-spacing:0.8px">[snap]</span>
<span class="a dc" style="left:985px;top:571px;font-size:13px;color:#3c3c3c;line-height:1;letter-spacing:0.85px;">&lt;DIR&gt;</span>
<span class="a dc" style="left:1039px;top:571px;font-size:13px;color:#3c3c3c;line-height:1;letter-spacing:0.58px;">19.10.2021 19:3...</span>
<span class="a dc" style="left:1159px;top:571px;font-size:13px;color:#3c3c3c;line-height:1;letter-spacing:0.9px;">drwx------</span>
<svg class="a" style="left:774px;top:595px" width="20" height="18" viewBox="0 0 20 18"><path d="M0,1 Q0,0 1,0 H7 L9,2 H19 Q20,2 20,3 V17 Q20,18 19,18 H1 Q0,18 0,17Z" fill="#4a86d4"/><rect x="0" y="4" width="20" height="14" rx="1" fill="#5294e2"/><rect x="1" y="4" width="18" height="1.3" fill="#dfe9f5"/><path d="M10,7 V13 M7.5,11 L10,13.5 L12.5,11 M7,15.5 H13" stroke="#1d3f6e" stroke-width="1.4" fill="none"/></svg>
<span class="a dc" style="left:798px;top:597px;font-size:13px;color:#3c3c3c;line-height:1;letter-spacing:0.8px">[Stiahnuté]</span>
<span class="a dc" style="left:985px;top:597px;font-size:13px;color:#3c3c3c;line-height:1;letter-spacing:0.85px;">&lt;DIR&gt;</span>
<span class="a dc" style="left:1039px;top:597px;font-size:13px;color:#3c3c3c;line-height:1;letter-spacing:0.58px;">20.10.2021 20:5...</span>
<span class="a dc" style="left:1159px;top:597px;font-size:13px;color:#3c3c3c;line-height:1;letter-spacing:0.9px;">drwxr-xr-x</span>
<svg class="a" style="left:774px;top:621px" width="20" height="18" viewBox="0 0 20 18"><path d="M0,1 Q0,0 1,0 H7 L9,2 H19 Q20,2 20,3 V17 Q20,18 19,18 H1 Q0,18 0,17Z" fill="#4a86d4"/><rect x="0" y="4" width="20" height="14" rx="1" fill="#5294e2"/><rect x="1" y="4" width="18" height="1.3" fill="#dfe9f5"/><rect x="6" y="10" width="6" height="5" fill="#1d3f6e"/><path d="M12,12.5 L15,10.5 V14.5Z" fill="#1d3f6e"/></svg>
<span class="a dc" style="left:798px;top:623px;font-size:13px;color:#3c3c3c;line-height:1;letter-spacing:0.8px">[Video]</span>
<span class="a dc" style="left:985px;top:623px;font-size:13px;color:#3c3c3c;line-height:1;letter-spacing:0.85px;">&lt;DIR&gt;</span>
<span class="a dc" style="left:1039px;top:623px;font-size:13px;color:#3c3c3c;line-height:1;letter-spacing:0.58px;">19.10.2021 19:3...</span>
<span class="a dc" style="left:1159px;top:623px;font-size:13px;color:#3c3c3c;line-height:1;letter-spacing:0.9px;">drwxr-xr-x</span>
<svg class="a" style="left:774px;top:647px" width="20" height="18" viewBox="0 0 20 18"><path d="M0,1 Q0,0 1,0 H7 L9,2 H19 Q20,2 20,3 V17 Q20,18 19,18 H1 Q0,18 0,17Z" fill="#4a86d4"/><rect x="0" y="4" width="20" height="14" rx="1" fill="#5294e2"/><rect x="1" y="4" width="18" height="1.3" fill="#dfe9f5"/></svg>
<span class="a dc" style="left:798px;top:649px;font-size:13px;color:#3c3c3c;line-height:1;letter-spacing:0.8px">[Virtualbox]</span>
<span class="a dc" style="left:985px;top:649px;font-size:13px;color:#3c3c3c;line-height:1;letter-spacing:0.85px;">&lt;DIR&gt;</span>
<span class="a dc" style="left:1039px;top:649px;font-size:13px;color:#3c3c3c;line-height:1;letter-spacing:0.58px;">16.04.2021 00:1...</span>
<span class="a dc" style="left:1159px;top:649px;font-size:13px;color:#3c3c3c;line-height:1;letter-spacing:0.9px;">drwxr-xr-x</span>
<svg class="a" style="left:774px;top:673px" width="20" height="18" viewBox="0 0 20 18"><path d="M0,1 Q0,0 1,0 H7 L9,2 H19 Q20,2 20,3 V17 Q20,18 19,18 H1 Q0,18 0,17Z" fill="#4a86d4"/><rect x="0" y="4" width="20" height="14" rx="1" fill="#5294e2"/><rect x="1" y="4" width="18" height="1.3" fill="#dfe9f5"/></svg>
<span class="a dc" style="left:798px;top:675px;font-size:13px;color:#3c3c3c;line-height:1;letter-spacing:0.8px">[Winesoft]</span>
<span class="a dc" style="left:985px;top:675px;font-size:13px;color:#3c3c3c;line-height:1;letter-spacing:0.85px;">&lt;DIR&gt;</span>
<span class="a dc" style="left:1039px;top:675px;font-size:13px;color:#3c3c3c;line-height:1;letter-spacing:0.58px;">20.10.2021 10:4...</span>
<span class="a dc" style="left:1159px;top:675px;font-size:13px;color:#3c3c3c;line-height:1;letter-spacing:0.9px;">drwxr-xr-x</span>
<div class="a" style="left:770px;top:786px;width:465px;height:15px;background:#dcdcdc"></div>
<div class="a" style="left:784px;top:790px;width:50px;height:9px;background:#b8b8b8;border:1px solid #acacac;border-radius:5px"></div>
<svg class="a" style="left:773px;top:789px" width="8" height="10"><path d="M6.5,2 L1.5,5 L6.5,8Z" fill="#bdbdbd"/></svg>
<svg class="a" style="left:1224px;top:789px" width="8" height="10"><path d="M1.5,2 L6.5,5 L1.5,8Z" fill="#bdbdbd"/></svg>
<div class="a" style="left:770px;top:815px;width:465px;height:1px;background:#c8c8c8"></div>
<span class="a dc" style="left:769px;top:803px;font-size:13px;color:#3c3c3c;line-height:1;">Vybrané: 0 z 0, súbory: 0 z 0, adresáre: 0 of 10</span>
<div class="a" style="left:1240px;top:382px;width:464px;height:404px;background:#f7f7f7;border:1px solid #111"></div>
<div class="a" style="left:1241px;top:383px;width:461px;height:26px;background:#d4d4d4;border-bottom:1px solid #111"></div>
<div class="a" style="left:1376px;top:383px;width:1px;height:26px;background:#111"></div>
<div class="a" style="left:1431px;top:383px;width:1px;height:26px;background:#111"></div>
<div class="a" style="left:1501px;top:383px;width:1px;height:26px;background:#111"></div>
<div class="a" style="left:1627px;top:383px;width:1px;height:26px;background:#111"></div>
<div class="a" style="left:1702px;top:383px;width:1px;height:26px;background:#111"></div>
<span class="a dc" style="left:1243px;top:390px;font-size:13px;color:#3c3c3c;line-height:1;">Meno</span>
<span class="a dc" style="left:1380px;top:390px;font-size:13px;color:#3c3c3c;line-height:1;">Prípona</span>
<span class="a dc" style="left:1435px;top:390px;font-size:13px;color:#3c3c3c;line-height:1;">Veľkosť</span>
<span class="a dc" style="left:1505px;top:390px;font-size:13px;color:#3c3c3c;line-height:1;">Dátum</span>
<span class="a dc" style="left:1631px;top:390px;font-size:13px;color:#3c3c3c;line-height:1;">Atr.</span>
<svg class="a" style="left:1248px;top:415px" width="14" height="14" viewBox="0 0 14 14"><path d="M7,13 V2 M1.5,7.5 L7,2 L12.5,7.5" stroke="#3a3a3a" stroke-width="2" fill="none"/></svg>
<span class="a dc" style="left:1268px;top:415px;font-size:13px;color:#3c3c3c;line-height:1;letter-spacing:0.8px">[..]</span>
<span class="a dc" style="left:1456px;top:415px;font-size:13px;color:#3c3c3c;line-height:1;letter-spacing:0.85px;">&lt;DIR&gt;</span>
<span class="a dc" style="left:1510px;top:415px;font-size:13px;color:#3c3c3c;line-height:1;letter-spacing:0.58px;">19.10.2021 19:1...</span>
<span class="a dc" style="left:1630px;top:415px;font-size:13px;color:#3c3c3c;line-height:1;letter-spacing:0.9px;">drwxr-xr-x</span>
<svg class="a" style="left:1244px;top:439px" width="20" height="18" viewBox="0 0 20 18"><path d="M0,1 Q0,0 1,0 H7 L9,2 H19 Q20,2 20,3 V17 Q20,18 19,18 H1 Q0,18 0,17Z" fill="#4a86d4"/><rect x="0" y="4" width="20" height="14" rx="1" fill="#5294e2"/><rect x="1" y="4" width="18" height="1.3" fill="#dfe9f5"/></svg>
<span class="a dc" style="left:1268px;top:441px;font-size:13px;color:#3c3c3c;line-height:1;letter-spacing:0.8px">[Archívne]</span>
<span class="a dc" style="left:1456px;top:441px;font-size:13px;color:#3c3c3c;line-height:1;letter-spacing:0.85px;">&lt;DIR&gt;</span>
<span class="a dc" style="left:1510px;top:441px;font-size:13px;color:#3c3c3c;line-height:1;letter-spacing:0.58px;">15.04.2021 22:4...</span>
<span class="a dc" style="left:1630px;top:441px;font-size:13px;color:#3c3c3c;line-height:1;letter-spacing:0.9px;">drwxr-xr-x</span>
<svg class="a" style="left:1244px;top:465px" width="20" height="18" viewBox="0 0 20 18"><path d="M0,1 Q0,0 1,0 H7 L9,2 H19 Q20,2 20,3 V17 Q20,18 19,18 H1 Q0,18 0,17Z" fill="#4a86d4"/><rect x="0" y="4" width="20" height="14" rx="1" fill="#5294e2"/><rect x="1" y="4" width="18" height="1.3" fill="#dfe9f5"/></svg>
<span class="a dc" style="left:1268px;top:467px;font-size:13px;color:#3c3c3c;line-height:1;letter-spacing:0.8px">[Download]</span>
<span class="a dc" style="left:1456px;top:467px;font-size:13px;color:#3c3c3c;line-height:1;letter-spacing:0.85px;">&lt;DIR&gt;</span>
<span class="a dc" style="left:1510px;top:467px;font-size:13px;color:#3c3c3c;line-height:1;letter-spacing:0.58px;">15.04.2021 22:4...</span>
<span class="a dc" style="left:1630px;top:467px;font-size:13px;color:#3c3c3c;line-height:1;letter-spacing:0.9px;">drwxr-xr-x</span>
<svg class="a" style="left:1244px;top:491px" width="20" height="18" viewBox="0 0 20 18"><path d="M0,1 Q0,0 1,0 H7 L9,2 H19 Q20,2 20,3 V17 Q20,18 19,18 H1 Q0,18 0,17Z" fill="#4a86d4"/><rect x="0" y="4" width="20" height="14" rx="1" fill="#5294e2"/><rect x="1" y="4" width="18" height="1.3" fill="#dfe9f5"/></svg>
<span class="a dc" style="left:1268px;top:493px;font-size:13px;color:#3c3c3c;line-height:1;letter-spacing:0.8px">[Hudba]</span>
<span class="a dc" style="left:1456px;top:493px;font-size:13px;color:#3c3c3c;line-height:1;letter-spacing:0.85px;">&lt;DIR&gt;</span>
<span class="a dc" style="left:1510px;top:493px;font-size:13px;color:#3c3c3c;line-height:1;letter-spacing:0.58px;">19.10.2021 19:0...</span>
<span class="a dc" style="left:1630px;top:493px;font-size:13px;color:#3c3c3c;line-height:1;letter-spacing:0.9px;">drwxr-xr-x</span>
<svg class="a" style="left:1244px;top:517px" width="20" height="18" viewBox="0 0 20 18"><path d="M0,1 Q0,0 1,0 H7 L9,2 H19 Q20,2 20,3 V17 Q20,18 19,18 H1 Q0,18 0,17Z" fill="#4a86d4"/><rect x="0" y="4" width="20" height="14" rx="1" fill="#5294e2"/><rect x="1" y="4" width="18" height="1.3" fill="#dfe9f5"/></svg>
<span class="a dc" style="left:1268px;top:519px;font-size:13px;color:#3c3c3c;line-height:1;letter-spacing:0.8px">[Linuxsoft]</span>
<span class="a dc" style="left:1456px;top:519px;font-size:13px;color:#3c3c3c;line-height:1;letter-spacing:0.85px;">&lt;DIR&gt;</span>
<span class="a dc" style="left:1510px;top:519px;font-size:13px;color:#3c3c3c;line-height:1;letter-spacing:0.58px;">22.05.2021 17:0...</span>
<span class="a dc" style="left:1630px;top:519px;font-size:13px;color:#3c3c3c;line-height:1;letter-spacing:0.9px;">drwxr-xr-x</span>
<svg class="a" style="left:1244px;top:543px" width="20" height="18" viewBox="0 0 20 18"><path d="M0,1 Q0,0 1,0 H7 L9,2 H19 Q20,2 20,3 V17 Q20,18 19,18 H1 Q0,18 0,17Z" fill="#4a86d4"/><rect x="0" y="4" width="20" height="14" rx="1" fill="#5294e2"/><rect x="1" y="4" width="18" height="1.3" fill="#dfe9f5"/></svg>
<span class="a dc" style="left:1268px;top:545px;font-size:13px;color:#3c3c3c;line-height:1;letter-spacing:0.8px">[lost+found]</span>
<span class="a dc" style="left:1456px;top:545px;font-size:13px;color:#3c3c3c;line-height:1;letter-spacing:0.85px;">&lt;DIR&gt;</span>
<span class="a dc" style="left:1510px;top:545px;font-size:13px;color:#3c3c3c;line-height:1;letter-spacing:0.58px;">15.04.2021 20:4...</span>
<span class="a dc" style="left:1630px;top:545px;font-size:13px;color:#3c3c3c;line-height:1;letter-spacing:0.9px;">drwxr-xr-x</span>
<svg class="a" style="left:1244px;top:569px" width="20" height="18" viewBox="0 0 20 18"><path d="M0,1 Q0,0 1,0 H7 L9,2 H19 Q20,2 20,3 V17 Q20,18 19,18 H1 Q0,18 0,17Z" fill="#4a86d4"/><rect x="0" y="4" width="20" height="14" rx="1" fill="#5294e2"/><rect x="1" y="4" width="18" height="1.3" fill="#dfe9f5"/></svg>
<span class="a dc" style="left:1268px;top:571px;font-size:13px;color:#3c3c3c;line-height:1;letter-spacing:0.8px">[Movies]</span>
<span class="a dc" style="left:1456px;top:571px;font-size:13px;color:#3c3c3c;line-height:1;letter-spacing:0.85px;">&lt;DIR&gt;</span>
<span class="a dc" style="left:1510px;top:571px;font-size:13px;color:#3c3c3c;line-height:1;letter-spacing:0.58px;">13.10.2021 00:5...</span>
<span class="a dc" style="left:1630px;top:571px;font-size:13px;color:#3c3c3c;line-height:1;letter-spacing:0.9px;">drwxr-xr-x</span>
<svg class="a" style="left:1244px;top:595px" width="20" height="18" viewBox="0 0 20 18"><path d="M0,1 Q0,0 1,0 H7 L9,2 H19 Q20,2 20,3 V17 Q20,18 19,18 H1 Q0,18 0,17Z" fill="#4a86d4"/><rect x="0" y="4" width="20" height="14" rx="1" fill="#5294e2"/><rect x="1" y="4" width="18" height="1.3" fill="#dfe9f5"/></svg>
<span class="a dc" style="left:1268px;top:597px;font-size:13px;color:#3c3c3c;line-height:1;letter-spacing:0.8px">[timeshift]</span>
<span class="a dc" style="left:1456px;top:597px;font-size:13px;color:#3c3c3c;line-height:1;letter-spacing:0.85px;">&lt;DIR&gt;</span>
<span class="a dc" style="left:1510px;top:597px;font-size:13px;color:#3c3c3c;line-height:1;letter-spacing:0.58px;">20.10.2021 11:0...</span>
<span class="a dc" style="left:1630px;top:597px;font-size:13px;color:#3c3c3c;line-height:1;letter-spacing:0.9px;">drwxr-xr-x</span>
<svg class="a" style="left:1244px;top:621px" width="20" height="18" viewBox="0 0 20 18"><path d="M0,1 Q0,0 1,0 H7 L9,2 H19 Q20,2 20,3 V17 Q20,18 19,18 H1 Q0,18 0,17Z" fill="#4a86d4"/><rect x="0" y="4" width="20" height="14" rx="1" fill="#5294e2"/><rect x="1" y="4" width="18" height="1.3" fill="#dfe9f5"/></svg>
<span class="a dc" style="left:1268px;top:623px;font-size:13px;color:#3c3c3c;line-height:1;letter-spacing:0.8px">[Virtualka]</span>
<span class="a dc" style="left:1456px;top:623px;font-size:13px;color:#3c3c3c;line-height:1;letter-spacing:0.85px;">&lt;DIR&gt;</span>
<span class="a dc" style="left:1510px;top:623px;font-size:13px;color:#3c3c3c;line-height:1;letter-spacing:0.58px;">21.08.2021 00:1...</span>
<span class="a dc" style="left:1630px;top:623px;font-size:13px;color:#3c3c3c;line-height:1;letter-spacing:0.9px;">drwxr-xr-x</span>
<div class="a" style="left:1240px;top:786px;width:464px;height:15px;background:#dcdcdc"></div>
<div class="a" style="left:1254px;top:790px;width:50px;height:9px;background:#b8b8b8;border:1px solid #acacac;border-radius:5px"></div>
<svg class="a" style="left:1243px;top:789px" width="8" height="10"><path d="M6.5,2 L1.5,5 L6.5,8Z" fill="#bdbdbd"/></svg>
<svg class="a" style="left:1693px;top:789px" width="8" height="10"><path d="M1.5,2 L6.5,5 L1.5,8Z" fill="#bdbdbd"/></svg>
<div class="a" style="left:1240px;top:815px;width:464px;height:1px;background:#c8c8c8"></div>
<span class="a dc" style="left:1239px;top:803px;font-size:13px;color:#3c3c3c;line-height:1;">Vybrané: 0 z 0, súbory: 0 z 0, adresáre: 0 of 8</span>
<span class="a dc" style="left:768px;top:824px;font-size:13px;color:#3c3c3c;line-height:1;letter-spacing:0.6px;">[/home/dumaru/]$:</span>
<div class="a" style="left:889px;top:820px;width:815px;height:22px;background:#f5f5f5;border:1px solid #a6a6a6;border-radius:3px"></div>
<div class="a" style="left:1681px;top:821px;width:1px;height:20px;background:#c8c8c8"></div>
<svg class="a" style="left:1687px;top:827px" width="12" height="8"><path d="M2,2 H10 L6,6.5Z" fill="#666" stroke="#555" stroke-width="0.8"/></svg>
<span class="a dc" style="left:803px;top:851px;font-size:11px;color:#3c3c3c;line-height:1;">View F3</span>
<span class="a dc" style="left:914px;top:851px;font-size:11px;color:#3c3c3c;line-height:1;">Edit F4</span>
<span class="a dc" style="left:1019px;top:851px;font-size:11px;color:#3c3c3c;line-height:1;">Copy F5</span>
<span class="a dc" style="left:1129px;top:851px;font-size:11px;color:#3c3c3c;line-height:1;">Move F6</span>
<span class="a dc" style="left:1242px;top:851px;font-size:11px;color:#3c3c3c;line-height:1;">Adresár F7</span>
<span class="a dc" style="left:1366px;top:851px;font-size:11px;color:#3c3c3c;line-height:1;">Vymazať F8</span>
<span class="a dc" style="left:1494px;top:851px;font-size:11px;color:#3c3c3c;line-height:1;">Terminal F9</span>
<span class="a dc" style="left:1622px;top:851px;font-size:11px;color:#3c3c3c;line-height:1;">Exit Alt+X</span>
<!-- TERMINAL -->
<div class="win" style="left:170px;top:381px;width:579px;height:434px;">
 <div class="title" style="color:#3a3a3a;font-size:13.6px;letter-spacing:0.2px;line-height:25px;-webkit-text-stroke:0.25px #3a3a3a">dumaru@dell960: ~</div>
 <svg class="a" style="left:506px;top:8px" width="70" height="10" viewBox="0 0 70 10"><g stroke="#7a7a7a" stroke-width="2"><line x1="3" y1="5" x2="11" y2="5"/><line x1="27" y1="5" x2="35" y2="5"/><line x1="31" y1="1" x2="31" y2="9"/><line x1="52" y1="1" x2="60" y2="9"/><line x1="60" y1="1" x2="52" y2="9"/></g></svg>
 <div class="strip"></div>
 <div class="mbar"><span style="left:9px">Súbor</span><span style="left:63px">Upraviť</span><span style="left:125px">Zobrazenie</span><span style="left:209px">Hľadať</span><span style="left:267px">Terminál</span><span style="left:337px">Pomocník</span></div>
 <div class="a" style="left:0;top:46px;width:577px;height:387px;background:#fcfcfc"></div>
 <div class="a" style="left:562px;top:46px;width:15px;height:387px;background:#ececec"></div>
 <div class="a" style="left:565px;top:50px;width:10px;height:351px;background:#dcdcdc;border:1px solid #8a8a8a;border-radius:5px"></div>
</div>
<pre class="term a" style="left:172px;top:430px"><span class="g">dumaru@dell960</span>:<span class="b">~</span>$ neofetch
<span class="r">            .-/+oossssoo+/-.</span>               <span class="r">dumaru</span>@<span class="r">dell960</span>
<span class="r">        `:+ssssssssssssssssss+:`</span>           --------------
<span class="r">      -+ssssssssssssssssssyyssss+-</span>         <span class="r">OS</span>: Ubuntu 20.04.3 LTS x86_64
<span class="r">    .ossssssssssssssssss</span>dMMMNy<span class="r">sssso.</span>       <span class="r">Host</span>: OptiPlex 960
<span class="r">   /sssssssssss</span>hdmmNNmmyNMMMMh<span class="r">ssssss/</span>      <span class="r">Kernel</span>: 5.11.0-38-generic
<span class="r">  +sssssssss</span>hm<span class="r">yd</span>MMMMMMMNddddy<span class="r">ssssssss+</span>     <span class="r">Uptime</span>: 11 hours, 18 mins
<span class="r"> /ssssssss</span>hNMMM<span class="r">yh</span>hyyyyhmNMMMNh<span class="r">ssssssss/</span>    <span class="r">Packages</span>: 2392 (dpkg), 5 (snap)
<span class="r">.ssssssss</span>dMMMNh<span class="r">ssssssssss</span>hNMMMd<span class="r">ssssssss.</span>   <span class="r">Shell</span>: bash 5.0.17
<span class="r">+ssss</span>hhhyNMMNy<span class="r">ssssssssssss</span>yNMMMy<span class="r">sssssss+</span>   <span class="r">Resolution</span>: 1920x1080
<span class="r">oss</span>yNMMMNyMMh<span class="r">ssssssssssssss</span>hmmmh<span class="r">ssssssso</span>   <span class="r">DE</span>: MATE
<span class="r">oss</span>yNMMMNyMMh<span class="r">sssssssssssssshmmmhssssssso</span>   <span class="r">WM</span>: Metacity (Marco)
<span class="r">+ssss</span>hhhyNMMNy<span class="r">ssssssssssss</span>yNMMMy<span class="r">sssssss+</span>   <span class="r">WM Theme</span>: Blackbird
<span class="r">.ssssssss</span>dMMMNh<span class="r">ssssssssss</span>hNMMMd<span class="r">ssssssss.</span>   <span class="r">Theme</span>: Bluebird [GTK2/3]
<span class="r"> /ssssssss</span>hNMMM<span class="r">yh</span>hyyyyhdNMMMNh<span class="r">ssssssss/</span>    <span class="r">Icons</span>: Papirus [GTK2/3]
<span class="r">  +sssssssss</span>dm<span class="r">yd</span>MMMMMMMMddddy<span class="r">ssssssss+</span>     <span class="r">Terminal</span>: mate-terminal
<span class="r">   /sssssssssss</span>hdmNNNNmyNMMMMh<span class="r">ssssss/</span>      <span class="r">Terminal Font</span>: Ubuntu Mono 11
<span class="r">    .ossssssssssssssssss</span>dMMMNy<span class="r">sssso.</span>       <span class="r">CPU</span>: Intel Core 2 Duo E8400 (2) @ 2.
<span class="r">      -+sssssssssssssssss</span>yyy<span class="r">ssss+-</span>         <span class="r">GPU</span>: Intel 4 Series Chipset
<span class="r">        `:+ssssssssssssssssss+:`</span>           <span class="r">Memory</span>: 927MiB / 2934MiB
<span class="r">            .-/+oossssoo+/-.</span>               </pre>
<div class="a" style="left:473px;top:765px;width:21px;height:16px;background:#2e3436"></div><div class="a" style="left:494px;top:765px;width:21px;height:16px;background:#cc0000"></div><div class="a" style="left:515px;top:765px;width:21px;height:16px;background:#4e9a06"></div><div class="a" style="left:536px;top:765px;width:21px;height:16px;background:#c4a000"></div><div class="a" style="left:557px;top:765px;width:21px;height:16px;background:#3465a4"></div><div class="a" style="left:578px;top:765px;width:21px;height:16px;background:#75507b"></div><div class="a" style="left:599px;top:765px;width:21px;height:16px;background:#06989a"></div><div class="a" style="left:620px;top:765px;width:21px;height:16px;background:#d3d7cf"></div><div class="a" style="left:473px;top:781px;width:21px;height:16px;background:#555753"></div><div class="a" style="left:494px;top:781px;width:21px;height:16px;background:#ef2929"></div><div class="a" style="left:515px;top:781px;width:21px;height:16px;background:#8ae234"></div><div class="a" style="left:536px;top:781px;width:21px;height:16px;background:#fce94f"></div><div class="a" style="left:557px;top:781px;width:21px;height:16px;background:#729fcf"></div><div class="a" style="left:578px;top:781px;width:21px;height:16px;background:#ad7fa8"></div><div class="a" style="left:599px;top:781px;width:21px;height:16px;background:#34e2e2"></div><div class="a" style="left:620px;top:781px;width:21px;height:16px;background:#eeeeec"></div>

<!-- APPLICATIONS MENU -->
<div class="menu" style="left:0;top:28px;width:213px;height:294px;">
 <div class="a" style="left:0;top:60px;width:211px;height:29px;background:#7896b4;border:1px solid #5f7f9f"></div>
</div>
<div class="a" style="left:0;top:28px;width:213px;height:294px">
 <div class="mi" style="top:2px"><svg class="ic" style="left:8px;top:4px" viewBox="0 0 20 20"><circle cx="7" cy="6" r="5" fill="#e53935"/><circle cx="13" cy="6" r="5" fill="#8e24aa"/><circle cx="15" cy="11" r="5" fill="#1e88e5"/><circle cx="12" cy="15" r="5" fill="#43a047"/><circle cx="6" cy="15" r="5" fill="#fb8c00"/><circle cx="5" cy="10" r="5" fill="#fdd835" opacity=".8"/></svg><span class="t">Grafika</span><span class="ar"></span></div>
 <div class="mi" style="top:31px"><svg class="ic" style="left:8px;top:4px" viewBox="0 0 20 20"><path d="M4,5 L16,5 Q20,5 20,12 L20,16 Q19,19 16,17 L13,13 L7,13 L4,17 Q1,19 0,16 L0,12 Q0,5 4,5Z" fill="#424242"/><path d="M5,5.5 V10.5 M2.5,8 H7.5" stroke="#fff" stroke-width="1.8"/><circle cx="14.5" cy="6.5" r="1" fill="#e53935"/><circle cx="16.5" cy="8.5" r="1" fill="#ffb300"/><circle cx="12.5" cy="8.5" r="1" fill="#ffb300"/><circle cx="14.5" cy="10.5" r="1" fill="#e53935"/></svg><span class="t">Hry</span><span class="ar"></span></div>
 <div class="mi" style="top:60px;color:#fff"><svg class="ic" style="left:8px;top:4px" viewBox="0 0 20 20"><circle cx="10" cy="10" r="10" fill="#5c6bc0"/><path d="M15,5 L11,11 L5,15 L9,9Z" fill="#fff"/><path d="M15,5 L11,11 L9,9Z" fill="#ef5350"/></svg><span class="t">Internet</span><span class="ar" style="border-left-color:#fff"></span></div>
 <div class="mi" style="top:89px"><svg class="ic" style="left:8px;top:3px" viewBox="0 0 20 22"><rect x="2" y="0" width="16" height="22" rx="1" fill="#dcdcdc"/><g stroke="#333" stroke-width="1"><line x1="5" y1="5" x2="15" y2="5"/><line x1="5" y1="8" x2="15" y2="8"/><line x1="5" y1="11" x2="15" y2="11"/><line x1="5" y1="14" x2="15" y2="14"/><line x1="5" y1="17" x2="15" y2="17"/></g></svg><span class="t">Kancelária</span><span class="ar"></span></div>
 <div class="mi" style="top:118px"><svg class="ic" style="left:8px;top:4px" viewBox="0 0 20 20"><path d="M0,0 L10,10 L0,20Z" fill="#26a69a"/><circle cx="11" cy="9" r="4" fill="#546e7a"/><rect x="9" y="3" width="4" height="4" fill="#37474f"/><path d="M3,19 L10,13 L19,19" stroke="#b0bec5" stroke-width="2" fill="none"/></svg><span class="t">Príslušenstvo</span><span class="ar"></span></div>
 <div class="mi" style="top:147px"><svg class="ic" style="left:8px;top:4px" viewBox="0 0 20 20"><circle cx="10" cy="10" r="10" fill="#1e88e5"/><circle cx="10" cy="10" r="4.5" fill="#fff"/><circle cx="10" cy="10" r="2" fill="#1e88e5"/></svg><span class="t">Programovanie</span><span class="ar"></span></div>
 <div class="mi" style="top:176px"><svg class="ic" style="left:8px;top:4px" viewBox="0 0 20 20"><circle cx="10" cy="10" r="8" fill="#546e7a"/><g fill="#546e7a"><rect x="8" y="0" width="4" height="20"/><rect x="0" y="8" width="20" height="4"/><rect x="8" y="0" width="4" height="20" transform="rotate(45 10 10)"/><rect x="8" y="0" width="4" height="20" transform="rotate(-45 10 10)"/></g><circle cx="10" cy="10" r="4" fill="#fcfcfc"/></svg><span class="t">Systémové nástroje</span><span class="ar"></span></div>
 <div class="mi" style="top:205px"><svg class="ic" style="left:8px;top:4px" viewBox="0 0 20 20"><circle cx="10" cy="10" r="10" fill="#3949ab"/><circle cx="10" cy="5" r="1.8" fill="#fff"/><path d="M5,8 H15 M10,8 V12 M8,17 L8.5,12 H11.5 L12,17" stroke="#fff" stroke-width="1.8" fill="none"/></svg><span class="t">Univerzálny prístup</span><span class="ar"></span></div>
 <div class="mi" style="top:234px"><svg class="ic" style="left:8px;top:4px" viewBox="0 0 20 20"><circle cx="10" cy="10" r="10" fill="#4db6ac"/><ellipse cx="10" cy="10" rx="7" ry="3" fill="none" stroke="#37474f" stroke-width="1"/><ellipse cx="10" cy="10" rx="3" ry="7" fill="none" stroke="#37474f" stroke-width="1"/><circle cx="10" cy="10" r="2" fill="#37474f"/></svg><span class="t">Vzdelávanie</span><span class="ar"></span></div>
 <div class="mi" style="top:263px"><svg class="ic" style="left:8px;top:4px" viewBox="0 0 20 20"><rect x="0" y="1" width="20" height="16" fill="#8e24aa"/><path d="M6,5 L13,9 L6,13Z" fill="#fff"/><circle cx="11" cy="17" r="2.5" fill="#ff9800"/><circle cx="17" cy="16" r="2.5" fill="#ff9800"/><path d="M13,17 V10 L19,9 V16" stroke="#ff9800" stroke-width="1.5" fill="none"/></svg><span class="t">Zvuk a video</span><span class="ar"></span></div>
</div>
<!-- INTERNET SUBMENU -->
<div class="menu" style="left:211px;top:86px;width:258px;height:178px;border:1px solid #d4d4d4;border-top-color:#e0e0e0">
 <div class="mi" style="top:1px"><svg class="ic" style="left:7px;top:5px" viewBox="0 0 20 20"><rect x="0" y="0" width="20" height="20" rx="1" fill="#d9534f"/><path d="M4.5,16.5 L7,3.5 L14.5,3.5 L14,6 L9.3,6 L8.8,8.8 L12.5,8.8 L12,11 L8.4,11 L7.3,16.5Z" fill="#fff"/><path d="M10.5,10.5 L17,10.5 L16.6,12.4 L12.8,15.2 L16.2,15.2 L15.8,17 L9.2,17 L9.6,15.2 L13.4,12.3 L10.1,12.3Z" fill="#fff"/></svg><span class="t">FileZilla</span></div>
 <div class="mi" style="top:30px"><svg class="ic" style="left:7px;top:5px" viewBox="0 0 20 20"><circle cx="10" cy="11" r="9" fill="#ff7139"/><circle cx="10" cy="11" r="5" fill="#7542e5"/><path d="M12,0 Q20,6 19,13 Q15,5 9,5Z" fill="#ffbd4f"/><path d="M1,8 Q3,3 6,4 Q4,7 4,10Z" fill="#ff4f5e"/></svg><span class="t">Firefox - internetový prehliadač</span></div>
 <div class="mi" style="top:59px"><svg class="ic" style="left:7px;top:5px" viewBox="0 0 20 20"><circle cx="10" cy="10" r="10" fill="#db4437"/><path d="M10,10 L1.3,15 A10,10 0 0 0 15,18.7Z" fill="#0f9d58"/><path d="M10,10 L15,18.7 A10,10 0 0 0 20,10 L10,6Z" fill="#f4b400"/><circle cx="10" cy="10" r="4.6" fill="#fff"/><circle cx="10" cy="10" r="3.6" fill="#4285f4"/></svg><span class="t">Google Chrome</span></div>
 <div class="mi" style="top:88px"><svg class="ic" style="left:7px;top:5px" viewBox="0 0 20 20"><path d="M7,1 L20,0 L19,12 L8,12Z" fill="#fdee58"/><rect x="0" y="7" width="12" height="12" fill="#ff9800"/><text x="2" y="17" font-size="10" fill="#fff" font-family="Liberation Sans">#</text></svg><span class="t">HexChat</span></div>
 <div class="mi" style="top:117px"><svg class="ic" style="left:7px;top:5px" viewBox="0 0 20 20"><rect x="3" y="3" width="14" height="17" rx="1" fill="#dcdcdc"/><rect x="4" y="0" width="12" height="4" rx="2" fill="#e53935"/><path d="M10,4 V15 M7,12 L10,16 L13,12" stroke="#333" stroke-width="2" fill="none"/></svg><span class="t">Transmission</span></div>
 <div class="mi" style="top:146px"><svg class="ic" style="left:7px;top:5px" viewBox="0 0 20 20"><rect x="0" y="0" width="20" height="20" fill="#6aaa2a"/><path d="M3,4 V13 Q3,17 7,17 H13 Q17,17 17,13 V9 H12" stroke="#fff" stroke-width="2.5" fill="none"/><path d="M9,4 V13 M6,10 L9,14 L12,10" stroke="#fff" stroke-width="2.2" fill="none"/><path d="M12,4 H17" stroke="#fff" stroke-width="2.5"/></svg><span class="t">uGet</span></div>
</div>

<!-- TASKBAR -->
<div class="a" style="left:0;top:1052px;width:1920px;height:28px;background:#cecece"></div>
<div class="a" style="left:4px;top:1058px;width:4px;height:4px;background:#3a3a3a"></div>
<div class="a" style="left:4px;top:1065px;width:4px;height:4px;background:#3a3a3a"></div>
<div class="a" style="left:4px;top:1072px;width:4px;height:4px;background:#3a3a3a"></div>
<svg class="a" style="left:16px;top:1059px" width="16" height="15" viewBox="0 0 16 15"><rect x="0" y="0" width="16" height="15" rx="2" fill="#d9412b"/><path d="M2,2 Q7,7.5 2,13" stroke="#fff" stroke-width="1.8" fill="none"/><path d="M14,2 Q9,7.5 14,13" stroke="#fff" stroke-width="1.8" fill="none"/></svg>
<span class="a" style="left:39px;top:1059px;font-size:13.5px;line-height:15px;color:#3c3c3c;white-space:nowrap">Double Commander</span>
<svg class="a" style="left:196px;top:1058px" width="15" height="15" viewBox="0 0 20 20"><circle cx="10" cy="10" r="10" fill="#db4437"/><path d="M10,10 L1.3,15 A10,10 0 0 0 15,18.7Z" fill="#0f9d58"/><path d="M10,10 L15,18.7 A10,10 0 0 0 20,10 L10,6Z" fill="#f4b400"/><circle cx="10" cy="10" r="4.6" fill="#fff"/><circle cx="10" cy="10" r="3.6" fill="#4285f4"/></svg>
<span class="a" style="left:219px;top:1059px;font-size:13.5px;line-height:15px;color:#3c3c3c;white-space:nowrap">[Q4OS TDE | LinuxOS....</span>
<div class="a" style="left:370px;top:1053px;width:181px;height:27px;background:#bcbcbc;border:1px solid #9c9c9c;border-radius:3px"></div>
<svg class="a" style="left:375px;top:1059px" width="16" height="14" viewBox="0 0 16 14"><rect x="0" y="0" width="16" height="14" rx="1.5" fill="#333"/><text x="1.5" y="8" font-size="7" fill="#eee" font-family="Liberation Mono">$_</text></svg>
<span class="a" style="left:399px;top:1059px;font-size:13.5px;line-height:15px;color:#3c3c3c;white-space:nowrap">dumaru@dell960: ~</span>
</body></html>
